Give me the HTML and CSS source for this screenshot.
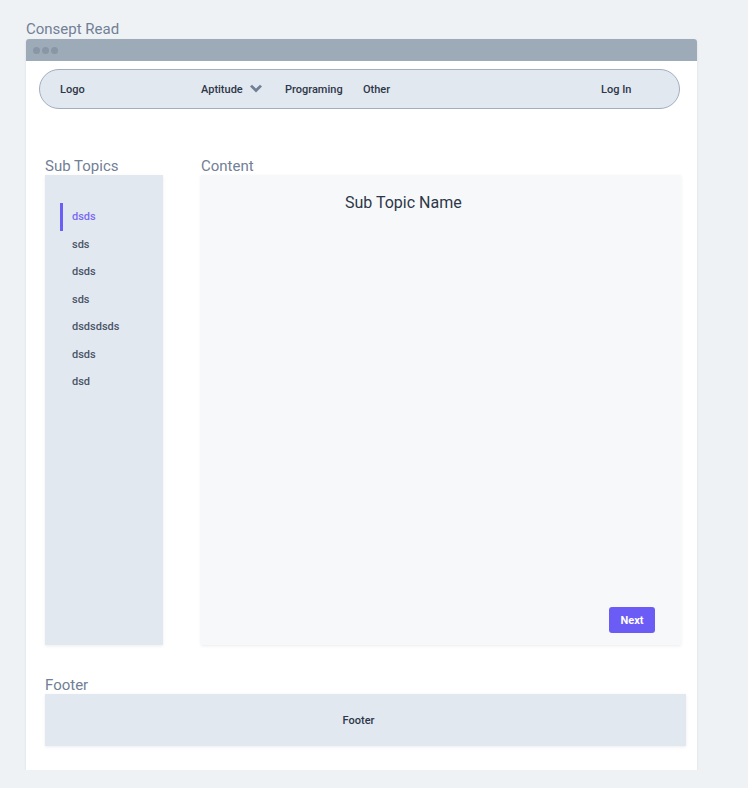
FILE: index.html
```html
<!DOCTYPE html>
<html>
<head>
<meta charset="utf-8">
<link rel="stylesheet" href="styles.css">
</head>
<body>
<div class="page">
  <div class="app-title">Consept Read</div>
  <div class="window">
    <div class="titlebar">
      <span class="dot"></span><span class="dot"></span><span class="dot"></span>
    </div>
    <div class="window-body">
      <nav class="navbar">
        <span class="nav-logo">Logo</span>
        <span class="nav-item nav-aptitude">Aptitude
          <svg class="chev" width="14" height="10" viewBox="0 0 14 10"><path d="M1 2.5 L3 0.8 L7 4.6 L11 0.8 L13 2.5 L7 8.4 Z" fill="#718096"/></svg>
        </span>
        <span class="nav-item nav-prog">Programing</span>
        <span class="nav-item nav-other">Other</span>
        <span class="nav-login">Log In</span>
      </nav>

      <div class="main">
        <div class="col-side">
          <div class="section-label">Sub Topics</div>
          <ul class="sidebar">
            <li class="active">dsds</li>
            <li>sds</li>
            <li>dsds</li>
            <li>sds</li>
            <li>dsdsdsds</li>
            <li>dsds</li>
            <li>dsd</li>
          </ul>
        </div>
        <div class="col-content">
          <div class="section-label">Content</div>
          <div class="content">
            <h2 class="topic-name">Sub Topic Name</h2>
            <div class="content-footer">
              <button class="next-btn">Next</button>
            </div>
          </div>
        </div>
      </div>

      <div class="footer-wrap">
        <div class="section-label">Footer</div>
        <div class="footer">Footer</div>
      </div>
    </div>
  </div>
</div>
</body>
</html>
```

FILE: styles.css
```css
html, body {
  margin: 0;
  padding: 0;
  background: #eff2f5;
  font-family: Roboto, "Noto Sans", sans-serif;
}
.page {
  padding: 20px 0 0 26px;
  width: 671px;
}
.app-title {
  font-size: 15px;
  color: #718096;
  line-height: 19px;
  font-weight: 400;
}
.window {
  background: #fff;
  border-radius: 3px 3px 0 0;
  box-shadow: 0 1px 3px rgba(0,0,0,0.08);
  overflow: hidden;
}
.titlebar {
  height: 22px;
  background: #9dabb8;
  display: flex;
  align-items: center;
  gap: 2px;
  padding-left: 7px;
}
.dot {
  width: 7px;
  height: 7px;
  border-radius: 50%;
  background: #8896a5;
}
.window-body {
  padding: 8px 19px 24px 13px;
}
.navbar {
  height: 38px;
  border: 1px solid #a0aec0;
  border-radius: 20px;
  background: #e2e8f0;
  display: flex;
  align-items: center;
  font-size: 11px;
  font-weight: 500;
  color: #2d3748;
  padding-left: 20px;
  margin-right: -2px;
}
.nav-logo { width: 141px; }
.nav-aptitude { display: flex; align-items: center; gap: 6px; width: 84px; }
.chev { display: block; }
.nav-prog { width: 78px; }
.nav-other { width: 238px; }

.main {
  display: flex;
  margin-top: 48px;
  padding-left: 6px;
  gap: 38px;
}
.section-label {
  font-size: 15px;
  color: #718096;
  line-height: 18px;
  font-weight: 400;
}
.col-side { width: 118px; flex-shrink: 0; }
.sidebar {
  list-style: none;
  margin: 0;
  padding: 28px 0 0 0;
  height: 442px;
  background: #e2e8f0;
  box-shadow: 0 1px 3px rgba(0,0,0,0.08);
}
.sidebar li {
  font-size: 11px;
  font-weight: 500;
  color: #4a5568;
  height: 27.4px;
  line-height: 27.4px;
  padding-left: 27px;
}
.sidebar li.active {
  color: #7a6af3;
  border-left: 3px solid #6c5ff5;
  margin-left: 15px;
  padding-left: 9px;
  line-height: 28px;
  height: 28px;
}
.col-content { width: 480px; flex-shrink: 0; }
.content {
  height: 470px;
  background: #f7f8fa;
  box-shadow: 0 1px 3px rgba(0,0,0,0.08);
  display: flex;
  flex-direction: column;
}
.topic-name {
  margin: 18px 0 0 144px;
  font-size: 16px;
  font-weight: 400;
  color: #2d3748;
  line-height: 20px;
}
.content-footer {
  margin-top: auto;
  display: flex;
  justify-content: flex-end;
  padding: 0 26px 12px 0;
}
.next-btn {
  border: none;
  background: #6b5cf6;
  color: #fff;
  font-family: inherit;
  font-size: 11px;
  font-weight: 700;
  width: 46px;
  height: 26px;
  border-radius: 3px;
  padding: 0;
}
.footer-wrap {
  margin-top: 31px;
  padding-left: 6px;
}
.footer {
  height: 52px;
  background: #e2e8f0;
  box-shadow: 0 1px 3px rgba(0,0,0,0.08);
  display: flex;
  align-items: center;
  justify-content: center;
  font-size: 11px;
  font-weight: 500;
  color: #2d3748;
  margin-right: -8px;
  padding-right: 14px;
}
```
